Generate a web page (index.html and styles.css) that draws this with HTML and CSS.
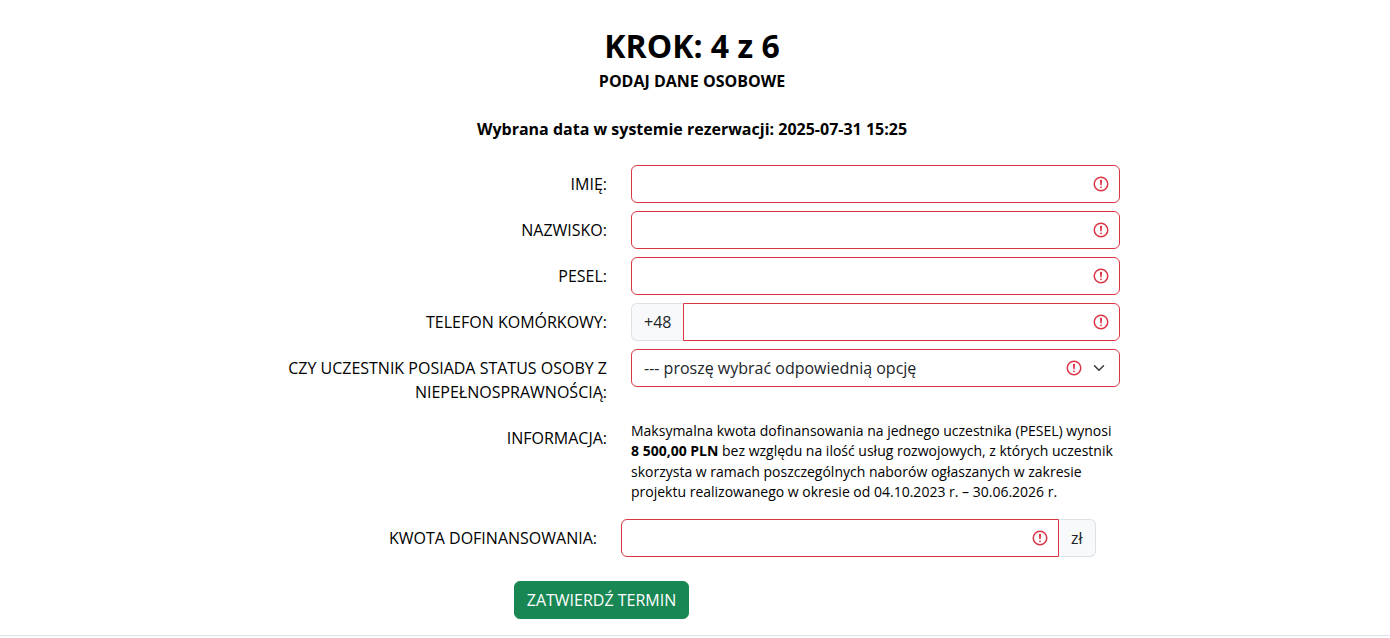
FILE: index.html
```html
<!DOCTYPE html>
<html lang="pl">
<head>
    <meta charset="UTF-8">
    <meta name="viewport" content="width=device-width, initial-scale=1.0">
    <title>Krok 4 z 6</title>
    <link rel="stylesheet" href="styles.css">
</head>
<body>
    <main class="page">
        <header class="step-header">
            <h1 class="step-title">KROK: 4 z 6</h1>
            <h2 class="step-subtitle">PODAJ DANE OSOBOWE</h2>
            <p class="step-date">Wybrana data w systemie rezerwacji: 2025-07-31 15:25</p>
        </header>

        <form class="form">
            <div class="form-row">
                <label class="form-label" for="imie">IMIĘ:</label>
                <div class="field">
                    <input class="form-control" id="imie" type="text">
                    <svg class="invalid-icon" viewBox="0 0 12 12" fill="none" stroke="#dc3545"><circle cx="6" cy="6" r="4.5"/><path stroke-linejoin="round" d="M5.8 3.6h.4L6 6.5z"/><circle cx="6" cy="8.2" r=".6" fill="#dc3545" stroke="none"/></svg>
                </div>
            </div>
            <div class="form-row">
                <label class="form-label" for="nazwisko">NAZWISKO:</label>
                <div class="field">
                    <input class="form-control" id="nazwisko" type="text">
                    <svg class="invalid-icon" viewBox="0 0 12 12" fill="none" stroke="#dc3545"><circle cx="6" cy="6" r="4.5"/><path stroke-linejoin="round" d="M5.8 3.6h.4L6 6.5z"/><circle cx="6" cy="8.2" r=".6" fill="#dc3545" stroke="none"/></svg>
                </div>
            </div>
            <div class="form-row">
                <label class="form-label" for="pesel">PESEL:</label>
                <div class="field">
                    <input class="form-control" id="pesel" type="text">
                    <svg class="invalid-icon" viewBox="0 0 12 12" fill="none" stroke="#dc3545"><circle cx="6" cy="6" r="4.5"/><path stroke-linejoin="round" d="M5.8 3.6h.4L6 6.5z"/><circle cx="6" cy="8.2" r=".6" fill="#dc3545" stroke="none"/></svg>
                </div>
            </div>
            <div class="form-row">
                <label class="form-label" for="telefon">TELEFON KOMÓRKOWY:</label>
                <div class="field input-group">
                    <span class="addon addon-left">+48</span>
                    <input class="form-control joined-left" id="telefon" type="text">
                    <svg class="invalid-icon" viewBox="0 0 12 12" fill="none" stroke="#dc3545"><circle cx="6" cy="6" r="4.5"/><path stroke-linejoin="round" d="M5.8 3.6h.4L6 6.5z"/><circle cx="6" cy="8.2" r=".6" fill="#dc3545" stroke="none"/></svg>
                </div>
            </div>
            <div class="form-row">
                <label class="form-label" for="status">CZY UCZESTNIK POSIADA STATUS OSOBY Z NIEPEŁNOSPRAWNOŚCIĄ:</label>
                <div class="field">
                    <select class="form-control form-select" id="status">
                        <option>--- proszę wybrać odpowiednią opcję</option>
                    </select>
                    <svg class="invalid-icon select-invalid" viewBox="0 0 12 12" fill="none" stroke="#dc3545"><circle cx="6" cy="6" r="4.5"/><path stroke-linejoin="round" d="M5.8 3.6h.4L6 6.5z"/><circle cx="6" cy="8.2" r=".6" fill="#dc3545" stroke="none"/></svg>
                    <svg class="chevron" viewBox="0 0 16 16" fill="none" stroke="#343a40" stroke-width="2" stroke-linecap="round" stroke-linejoin="round"><path d="m2 5 6 6 6-6"/></svg>
                </div>
            </div>
            <div class="form-row info-row">
                <div class="form-label info-label">INFORMACJA:</div>
                <p class="info-text">Maksymalna kwota dofinansowania na jednego uczestnika (PESEL) wynosi <strong>8 500,00 PLN</strong> bez względu na ilość usług rozwojowych, z których uczestnik skorzysta w ramach poszczególnych naborów ogłaszanych w zakresie projektu realizowanego w okresie od 04.10.2023 r. – 30.06.2026 r.</p>
            </div>
            <div class="form-row amount-row">
                <label class="form-label" for="kwota">KWOTA DOFINANSOWANIA:</label>
                <div class="field input-group">
                    <input class="form-control joined-right" id="kwota" type="text">
                    <svg class="invalid-icon amount-invalid" viewBox="0 0 12 12" fill="none" stroke="#dc3545"><circle cx="6" cy="6" r="4.5"/><path stroke-linejoin="round" d="M5.8 3.6h.4L6 6.5z"/><circle cx="6" cy="8.2" r=".6" fill="#dc3545" stroke="none"/></svg>
                    <span class="addon addon-right">zł</span>
                </div>
            </div>
            <div class="form-actions">
                <button class="btn-submit" type="button">ZATWIERDŹ TERMIN</button>
            </div>
        </form>
    </main>
    <hr class="footer-line">
</body>
</html>
```

FILE: styles.css
```css
* {
    margin: 0;
    padding: 0;
    box-sizing: border-box;
}

body {
    background: #fff;
    color: #000;
    font-family: "Open Sans", sans-serif;
    font-size: 16px;
    line-height: 1.5;
}

.page {
    width: 1384px;
    padding-top: 25px;
}

.step-header {
    text-align: center;
}

.step-title {
    font-size: 32px;
    font-weight: 700;
    line-height: 42px;
}

.step-subtitle {
    margin-top: 2px;
    font-size: 16px;
    font-weight: 700;
    line-height: 24px;
}

.step-date {
    margin-top: 24px;
    font-weight: 700;
    line-height: 24px;
}

.form {
    width: 850px;
    margin-left: 270px;
    margin-top: 24px;
}

.form-row {
    display: grid;
    grid-template-columns: 337px 489px;
    column-gap: 24px;
    margin-bottom: 8px;
}

.form-label {
    padding-top: 7px;
    text-align: right;
    line-height: 24px;
}

.field {
    position: relative;
    height: 38px;
}

.input-group {
    display: flex;
}

.form-control {
    display: block;
    width: 100%;
    height: 38px;
    padding: 6px 12px;
    font: inherit;
    color: #212529;
    background: #fff;
    border: 1px solid #dc3545;
    border-radius: 6px;
    outline: none;
}

.form-select {
    appearance: none;
    -webkit-appearance: none;
}

.invalid-icon {
    position: absolute;
    top: 10px;
    right: 10px;
    width: 18px;
    height: 18px;
}

.select-invalid {
    right: 37px;
}

.chevron {
    position: absolute;
    top: 13px;
    right: 15px;
    width: 12px;
    height: 12px;
}

.addon {
    display: flex;
    align-items: center;
    flex-shrink: 0;
    padding: 6px 12px;
    color: #212529;
    background: #f8f9fa;
    border: 1px solid #dee2e6;
}

.addon-left {
    border-right: 0;
    border-radius: 6px 0 0 6px;
}

.addon-right {
    border-left: 0;
    border-radius: 0 6px 6px 0;
}

.joined-left {
    border-radius: 0 6px 6px 0;
}

.joined-right {
    width: 438px;
    flex-shrink: 0;
    border-radius: 6px 0 0 6px;
}

.info-row {
    margin-bottom: 16px;
    padding-top: 2px;
}

.info-label {
    padding-top: 12px;
}

.info-text {
    padding-top: 7px;
    font-size: 14px;
    line-height: 20.4px;
}

.info-text strong {
    font-weight: 700;
}

.amount-row {
    margin-left: -10px;
    margin-bottom: 0;
}

.amount-invalid {
    right: auto;
    left: 410px;
}

.form-actions {
    margin-top: 24px;
    margin-left: 244px;
}

.btn-submit {
    width: 175px;
    height: 38px;
    padding: 6px 0;
    font: inherit;
    color: #fff;
    background: #198754;
    border: 1px solid #198754;
    border-radius: 6px;
}

.footer-line {
    margin-top: 16px;
    border: 0;
    border-top: 1px solid #dee2e6;
}
```
